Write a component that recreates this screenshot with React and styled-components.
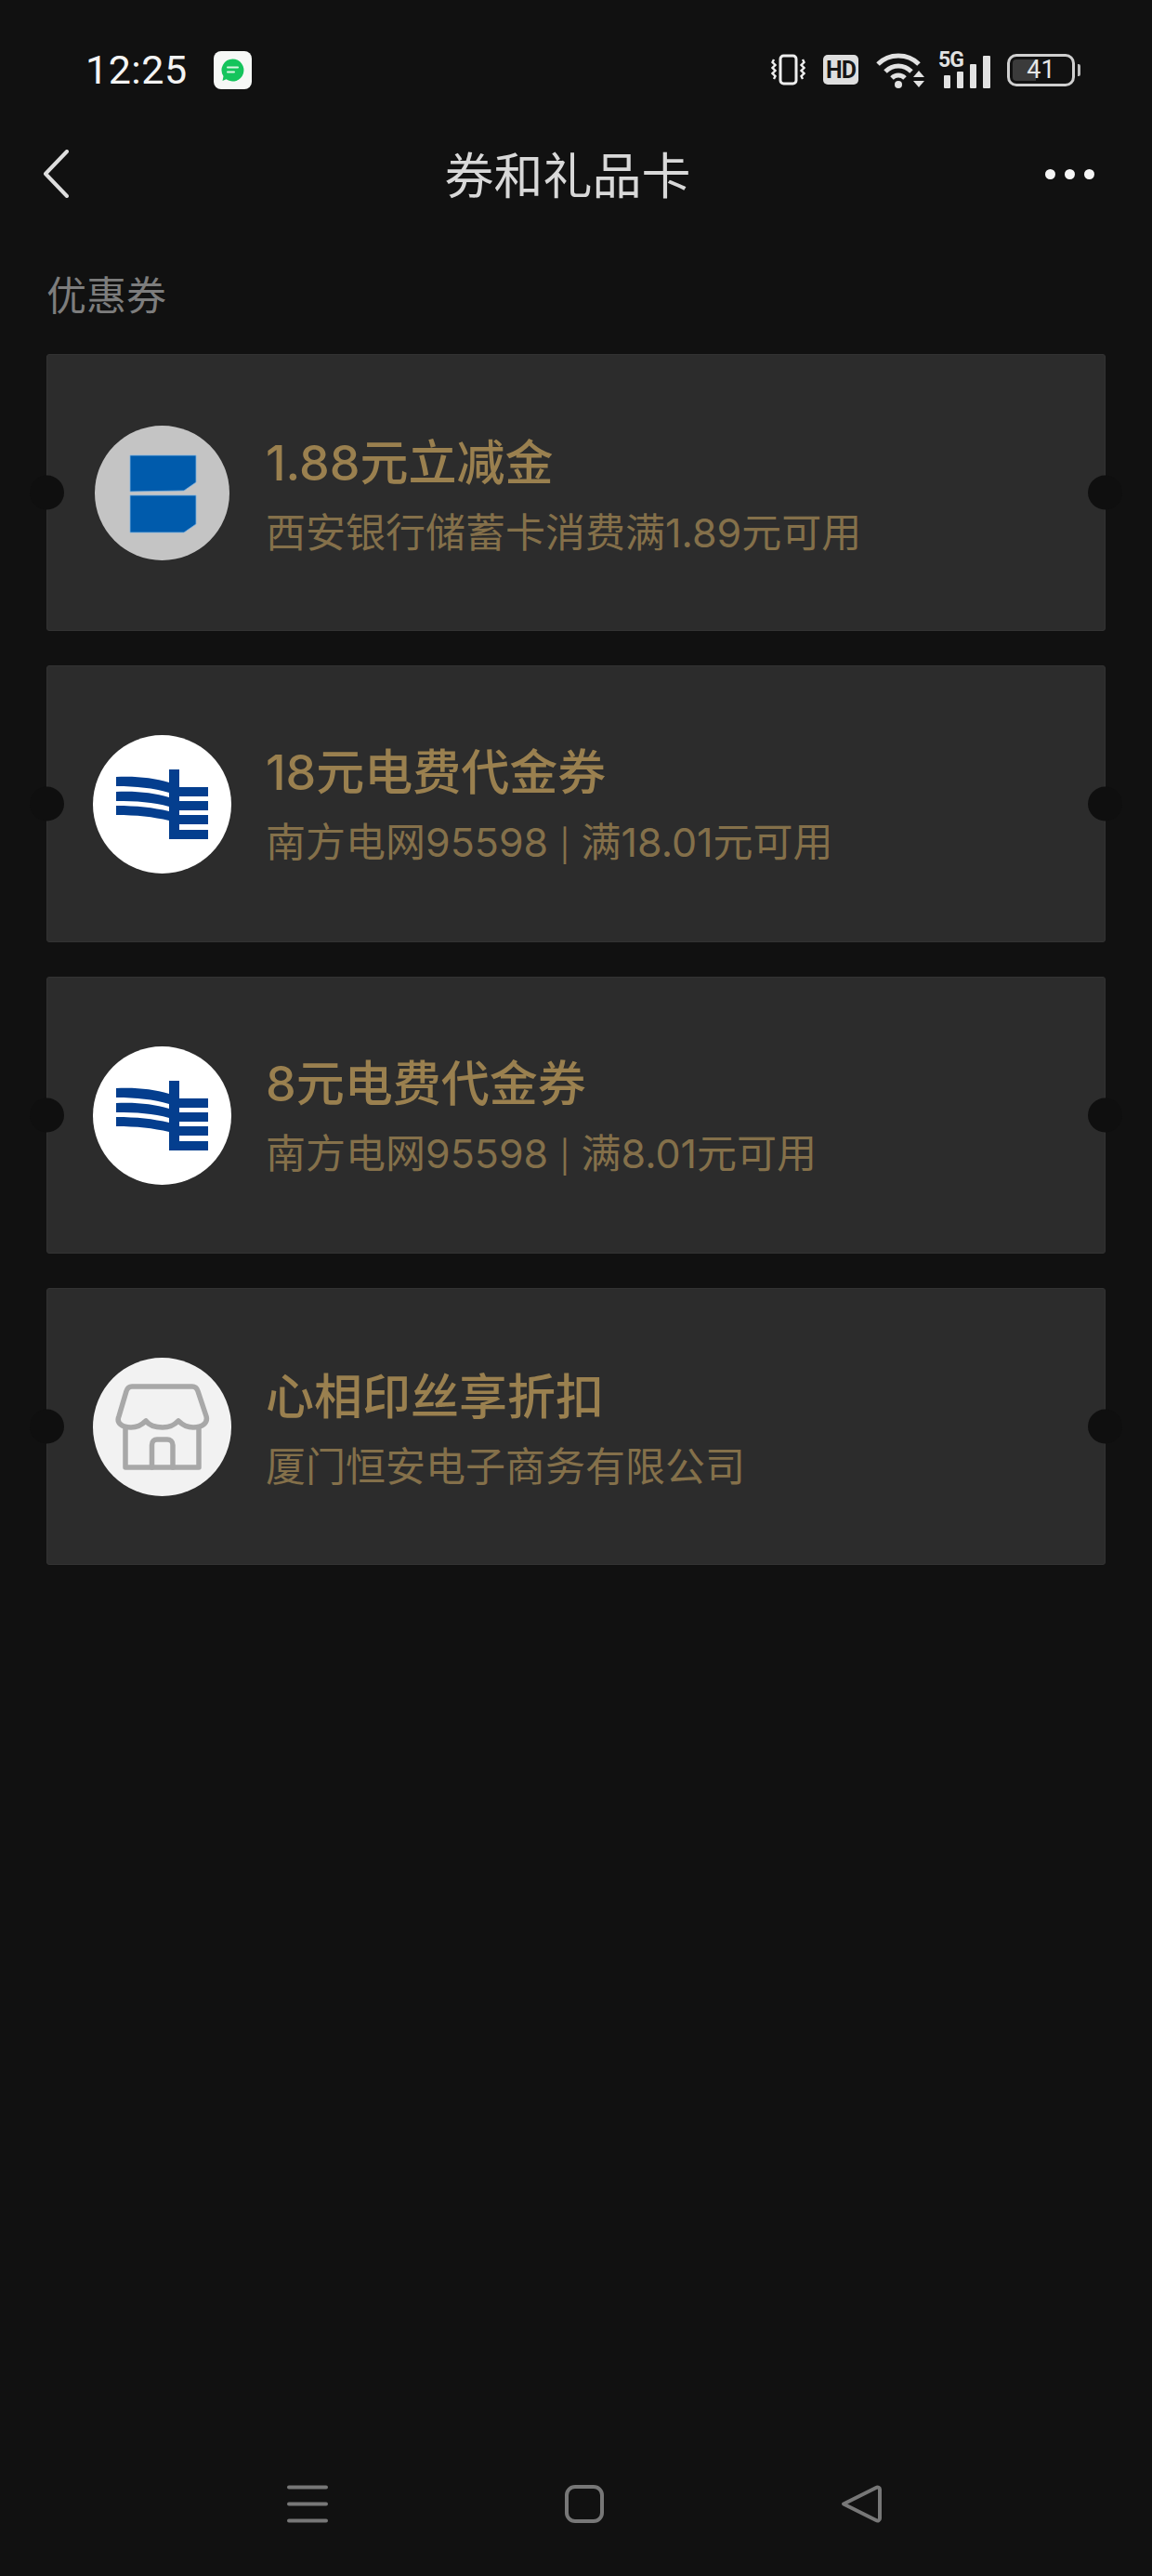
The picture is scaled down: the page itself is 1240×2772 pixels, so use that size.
import React from 'react'
import styled, { createGlobalStyle } from 'styled-components'

const GlobalStyle = createGlobalStyle`
  html, body {
    margin: 0;
    padding: 0;
    background: #111111;
  }
`

const Page = styled.div`
  display: flex;
  flex-direction: column;
  width: 1240px;
  height: 2772px;
  overflow: hidden;
  background: #111111;
  font-family: "Noto Sans CJK SC", "Noto Sans", sans-serif;
`

const StatusBar = styled.div`
  display: flex;
  align-items: center;
  height: 150px;
  padding: 0 83px 0 92px;
  box-sizing: border-box;
`

const Time = styled.span`
  font-family: Roboto, sans-serif;
  font-size: 43px;
  color: #f4f4f4;
  letter-spacing: 0.5px;
`

const AppBadge = styled.div`
  display: flex;
  align-items: center;
  justify-content: center;
  width: 41px;
  height: 41px;
  margin-left: 28px;
  border-radius: 8px;
  background: #f6f8f6;
`

const StatusIcons = styled.div`
  display: flex;
  align-items: center;
  margin-left: auto;
`

const HdBadge = styled.div`
  display: flex;
  align-items: center;
  justify-content: center;
  width: 38px;
  height: 32px;
  margin-left: 19px;
  border-radius: 5px;
  background: #dedede;
  color: #161616;
  font-family: "Roboto", sans-serif;
  font-size: 25px;
  font-weight: 700;
  letter-spacing: -1px;
`

const WifiIcon = styled.svg`
  display: block;
  margin-left: 19px;
`

const Signal = styled.div`
  position: relative;
  width: 55px;
  height: 39px;
  margin-left: 15px;
`

const FiveG = styled.span`
  position: absolute;
  top: -3px;
  left: -1px;
  font-family: "Roboto", sans-serif;
  font-size: 23px;
  font-weight: 700;
  line-height: 22px;
  letter-spacing: -1px;
  color: #e2e2e2;
  transform: scaleY(1.08);
`

const Battery = styled.div`
  position: relative;
  display: flex;
  align-items: center;
  justify-content: center;
  width: 73px;
  height: 35px;
  margin-left: 18px;
  box-sizing: border-box;
  border: 3px solid #cfcfcf;
  border-radius: 10px;
  color: #e6e6e6;
  font-family: "Roboto", sans-serif;
  font-size: 27px;
  font-weight: 400;

  &::before {
    content: '';
    position: absolute;
    top: 3px;
    left: 3px;
    bottom: 3px;
    width: 25px;
    border-radius: 4px 0 0 4px;
    background: #3b3b3b;
  }

  &::after {
    content: '';
    position: absolute;
    top: 8px;
    right: -9px;
    width: 3px;
    height: 13px;
    border-radius: 0 2px 2px 0;
    background: #bdbdbd;
  }
`

const BatteryLevel = styled.span`
  position: relative;
`

const NavBar = styled.div`
  display: flex;
  align-items: center;
  justify-content: space-between;
  height: 74px;
  padding: 0 62px 0 46px;
`

const PageTitle = styled.h1`
  margin: -2px 0 0 23px;
  color: #d8d8d8;
  font-size: 53px;
  font-weight: 400;
  line-height: 74px;
`

const Dots = styled.div`
  display: flex;
  gap: 10px;
`

const Dot = styled.span`
  width: 11px;
  height: 11px;
  border-radius: 50%;
  background: #f5f5f5;
`

const SectionLabel = styled.div`
  margin-top: 61px;
  padding-left: 50px;
  color: #7d7d7d;
  font-size: 43px;
  line-height: 60px;
`

const CouponList = styled.div`
  display: flex;
  flex-direction: column;
  gap: 37px;
  margin: 36px 50px 0;
`

const Card = styled.div`
  position: relative;
  display: flex;
  align-items: center;
  gap: 37px;
  height: 298px;
  padding-left: 49px;
  box-sizing: border-box;
  border: 1px solid #333333;
  border-radius: 3px;
  background: #2c2c2c;
`

const Notch = styled.span`
  position: absolute;
  top: 50%;
  ${({ $side }) => $side}: -19px;
  width: 37px;
  height: 37px;
  border-radius: 50%;
  background: #0f0f0f;
  transform: translateY(-50%);
`

const LogoSvg = styled.svg`
  flex: none;
  display: block;
  width: 149px;
  height: 149px;
`

const CardText = styled.div`
  display: flex;
  flex-direction: column;
  gap: 12px;
  padding-top: 7px;
`

const CardTitle = styled.div`
  color: #9a804f;
  font-family: "Inter", "Noto Sans CJK SC", sans-serif;
  font-size: 52px;
  font-weight: 500;
  line-height: 66px;
`

const CardSub = styled.div`
  color: #84704a;
  font-family: "Inter", "Noto Sans CJK SC", sans-serif;
  font-size: 43px;
  line-height: 58px;
`

const Pipe = styled.span`
  font-size: 34px;
  margin: 0 12px;
`

const BottomBar = styled.div`
  display: flex;
  align-items: center;
  gap: 254px;
  margin-top: auto;
  padding: 0 0 57px 309px;
`

const BarIcon = styled.svg`
  display: block;
  width: 44px;
  height: 41px;
  fill: none;
  stroke: #777777;
  stroke-width: 4;
  stroke-linecap: round;
  stroke-linejoin: round;
`

const BankLogo = () => (
  <LogoSvg viewBox="0 0 149 149">
    <circle cx="74.5" cy="74.5" r="72.5" fill="#c4c4c4" />
    <path
      d="M40 34H111V63L98 72L40 73Z M40 77H111V108L98 117H40Z"
      fill="#005bac"
      stroke="#7fb2df"
      strokeWidth="0.8"
    />
  </LogoSvg>
)

const GridLogo = () => (
  <LogoSvg viewBox="0 0 149 149">
    <circle cx="74.5" cy="74.5" r="74.5" fill="#ffffff" />
    <g fill="#043e8e">
      <path d="M82 37H93V56H124V66H93V71H124V81H93V86H124V96H93V102H124V112H82Z" />
      <path d="M25 45C47 44 65 46 82 51V62C65 57 47 55 25 55Z" />
      <path d="M25 61C47 60 65 62 82 67V77C65 72 47 71 25 71Z" />
      <path d="M25 76C47 76 65 78 82 82V92C65 88 47 86 25 86Z" />
    </g>
  </LogoSvg>
)

const StoreLogo = () => (
  <LogoSvg viewBox="0 0 149 149">
    <circle cx="74.5" cy="74.5" r="74.5" fill="#f2f2f2" />
    <g fill="none" stroke="#a8a8a8" strokeWidth="5.5" strokeLinejoin="round" strokeLinecap="round">
      <path d="M42 31H107C110 31 112 33 113 36L122 63C124 70 118 75 108 75C101 75 96 72 92 68C88 72 84 75 75 75C66 75 60 72 57 68C53 72 48 75 41 75C31 75 25 70 28 63L36 36C37 33 39 31 42 31Z" />
      <path d="M35 76V118H114V76" />
      <path d="M63.5 118V94C63.5 90 66 88 69 88H80C83 88 86 90 86 94V118" />
    </g>
  </LogoSvg>
)

const coupons = [
  { id: 1, title: '1.88元立减金', sub: '西安银行储蓄卡消费满1.89元可用', Logo: BankLogo },
  { id: 2, title: '18元电费代金券', sub: <>南方电网95598<Pipe>|</Pipe>满18.01元可用</>, Logo: GridLogo },
  { id: 3, title: '8元电费代金券', sub: <>南方电网95598<Pipe>|</Pipe>满8.01元可用</>, Logo: GridLogo },
  { id: 4, title: '心相印丝享折扣', sub: '厦门恒安电子商务有限公司', Logo: StoreLogo }
]

const App = () => (
  <Page>
    <GlobalStyle />
    <StatusBar>
      <Time>12:25</Time>
      <AppBadge>
        <svg width="27" height="27" viewBox="0 0 27 27">
          <path d="M13.5 1.5a12 12 0 1 1-7 21.8L2.5 25l1-5A12 12 0 0 1 13.5 1.5Z" fill="#14c45c" />
          <path d="M8 10.5H19M8 15.5H15" stroke="#d8f5e2" strokeWidth="2" strokeLinecap="round" />
        </svg>
      </AppBadge>
      <StatusIcons>
        <svg width="37" height="34" viewBox="0 0 37 34" fill="none" stroke="#eeeeee">
          <rect x="10" y="2" width="17" height="30" rx="3.5" strokeWidth="3" />
          <path d="M3 6L1.5 9L4.5 12L1.5 15L4.5 18L1.5 21L4.5 24L3 27" strokeWidth="2.4" />
          <path d="M34 6L35.5 9L32.5 12L35.5 15L32.5 18L35.5 21L32.5 24L34 27" strokeWidth="2.4" />
        </svg>
        <HdBadge>HD</HdBadge>
        <WifiIcon width="53" height="39" viewBox="0 0 53 39">
          <g fill="none" stroke="#e2e2e2" strokeWidth="5">
            <path d="M2 13C14 1 34 1 46 13" />
            <path d="M10 21C18 13 30 13 38 21" />
            <path d="M17 28C21 24 27 24 31 28" />
          </g>
          <circle cx="24" cy="35" r="4" fill="#e2e2e2" />
          <path d="M46 20L52 27H40Z M40 31H52L46 38Z" fill="#e2e2e2" />
        </WifiIcon>
        <Signal>
          <FiveG>5G</FiveG>
          <svg width="55" height="39" viewBox="0 0 55 39" fill="#e2e2e2">
            <rect x="5" y="25" width="7" height="14" rx="1" />
            <rect x="19" y="21" width="7" height="18" rx="1" />
            <rect x="33" y="13" width="7" height="26" rx="1" />
            <rect x="47" y="4" width="8" height="35" rx="1" />
          </svg>
        </Signal>
        <Battery>
          <BatteryLevel>41</BatteryLevel>
        </Battery>
      </StatusIcons>
    </StatusBar>

    <NavBar>
      <svg width="28" height="52" viewBox="0 0 28 52" fill="none" stroke="#dedede" strokeWidth="4" strokeLinecap="round" strokeLinejoin="round">
        <path d="M26 2L3 26L26 50" />
      </svg>
      <PageTitle>券和礼品卡</PageTitle>
      <Dots>
        <Dot />
        <Dot />
        <Dot />
      </Dots>
    </NavBar>

    <SectionLabel>优惠券</SectionLabel>

    <CouponList>
      {coupons.map(({ id, title, sub, Logo }) => (
        <Card key={id}>
          <Notch $side="left" />
          <Notch $side="right" />
          <Logo />
          <CardText>
            <CardTitle>{title}</CardTitle>
            <CardSub>{sub}</CardSub>
          </CardText>
        </Card>
      ))}
    </CouponList>

    <BottomBar>
      <BarIcon viewBox="0 0 44 41">
        <path d="M2 2.5H42M2 20.5H42M2 38.5H42" />
      </BarIcon>
      <BarIcon viewBox="0 0 44 41">
        <rect x="3" y="2" width="38" height="37" rx="9" />
      </BarIcon>
      <BarIcon viewBox="0 0 44 41">
        <path d="M3 20.5L38 3C40 2 42 3 42 5V36C42 38 40 39 38 38Z" />
      </BarIcon>
    </BottomBar>
  </Page>
)

export default App
